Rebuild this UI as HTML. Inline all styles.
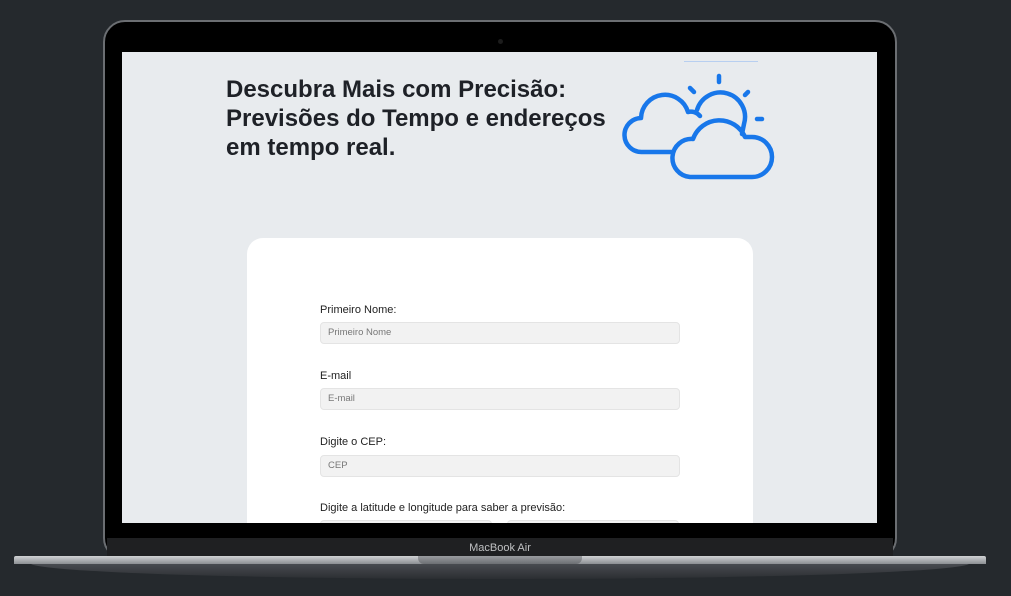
<!DOCTYPE html>
<html><head><meta charset="utf-8"><style>
*{margin:0;padding:0;box-sizing:border-box}
body{width:1011px;height:596px;background:#25292d;position:relative;overflow:hidden;font-family:"Liberation Sans",sans-serif}
.bezel{position:absolute;left:103px;top:20px;width:794px;height:540px;border-radius:22px;background:#000;border:2px solid #6b6e72}
.screen{position:absolute;left:122px;top:52px;width:755px;height:471px;background:#e8ebee;overflow:hidden}
.cam{position:absolute;left:498px;top:39px;width:5px;height:5px;border-radius:50%;background:#1c1c1c}
.chin{position:absolute;left:107px;top:538px;width:786px;height:20px;background:#1f2022;color:#bfc0c2;font-size:11px;text-align:center;line-height:20px}
.base{position:absolute;left:14px;top:556px;width:972px;height:8px;background:linear-gradient(#d0d2d4,#8c8f93);border-radius:2px 2px 0 0}
.base2{position:absolute;left:30px;top:563px;width:940px;height:16px;background:linear-gradient(#4a4d52,#2b2e32);border-radius:0 0 50% 50%/0 0 100% 100%}
.notch{position:absolute;left:418px;top:556px;width:164px;height:8px;background:linear-gradient(#9a9ca0,#6c6f73);border-radius:0 0 6px 6px}
h1{position:absolute;left:104px;top:23px;font-size:24px;line-height:29px;color:#1e2127;font-weight:bold;width:395px}
.card{position:absolute;left:125px;top:186px;width:506px;height:320px;background:#fff;border-radius:16px}
.l{position:absolute;left:73px;font-size:11px;color:#222}
.i{position:absolute;left:73px;width:360px;height:22px;background:#f2f2f2;border:1px solid #e4e4e4;border-radius:4px;font-size:9.5px;color:#777;padding-left:7px;line-height:20px}
</style></head><body>
<div class="bezel"></div>
<div class="cam"></div>
<div class="screen">
<h1>Descubra Mais com Precisão: Previsões do Tempo e endereços em tempo real.</h1>
<div style="position:absolute;left:562px;top:9px;width:74px;height:1px;background:#b8cff0"></div>
<div class="card">
<div class="l" style="top:66px">Primeiro Nome:</div>
<div class="i" style="top:84px">Primeiro Nome</div>
<div class="l" style="top:132px">E-mail</div>
<div class="i" style="top:150px">E-mail</div>
<div class="l" style="top:198px">Digite o CEP:</div>
<div class="i" style="top:217px">CEP</div>
<div class="l" style="top:264px">Digite a latitude e longitude para saber a previsão:</div>
<div class="i" style="top:282px;width:172px"></div>
<div class="i" style="top:282px;left:260px;width:172px"></div>
</div>
</div>
<svg style="position:absolute;left:600px;top:68px" width="180" height="115" viewBox="600 68 180 115">
<g fill="none" stroke="#1877ea" stroke-width="4.5" stroke-linecap="round" stroke-linejoin="round">
<line x1="719" y1="76" x2="719" y2="82"/><line x1="690" y1="88" x2="694" y2="92"/><line x1="748" y1="92" x2="745" y2="95"/><line x1="757" y1="119" x2="762" y2="119"/>
<path d="M697 110 A24 24 0 0 1 744 124 L742 134"/>
<path d="M672 152 H642 A17 17 0 0 1 641 118 A24 24 0 0 1 688 112 A12 12 0 0 1 700 116"/>
<path d="M690 177 H752 A20 20 0 0 0 752 137 H745 A28 28 0 0 0 693 139 A19 19 0 0 0 690 177 Z"/>
</g></svg>
<div class="chin">MacBook Air</div>
<div class="base2"></div>
<div class="base"></div>
<div class="notch"></div>
</body></html>
